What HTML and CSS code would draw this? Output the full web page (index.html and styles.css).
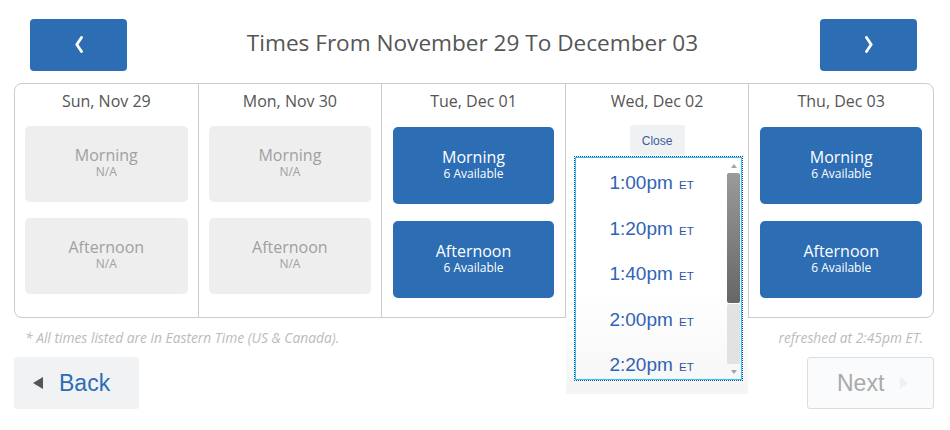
FILE: index.html
```html
<!DOCTYPE html>
<html lang="en">
<head>
<meta charset="utf-8">
<title>Times</title>
<link rel="stylesheet" href="styles.css">
</head>
<body>
<div class="page">
  <header class="topbar">
    <button class="nav-btn" aria-label="Previous">
      <svg width="10" height="17" viewBox="0 0 10 17"><path d="M7.5 1.5 L2.8 8.5 L7.5 15.5" fill="none" stroke="#fff" stroke-width="2.8" stroke-linecap="round" stroke-linejoin="round"/></svg>
    </button>
    <h1 class="title">Times From November 29 To December 03</h1>
    <button class="nav-btn" aria-label="Next">
      <svg width="10" height="17" viewBox="0 0 10 17"><path d="M2.5 1.5 L7.2 8.5 L2.5 15.5" fill="none" stroke="#fff" stroke-width="2.8" stroke-linecap="round" stroke-linejoin="round"/></svg>
    </button>
  </header>

  <div class="calendar">
    <div class="day">
      <div class="day-head">Sun, Nov 29</div>
      <div class="slots">
        <div class="slot slot-off"><span class="slot-name">Morning</span><span class="slot-sub">N/A</span></div>
        <div class="slot slot-off"><span class="slot-name">Afternoon</span><span class="slot-sub">N/A</span></div>
      </div>
    </div>
    <div class="day">
      <div class="day-head">Mon, Nov 30</div>
      <div class="slots">
        <div class="slot slot-off"><span class="slot-name">Morning</span><span class="slot-sub">N/A</span></div>
        <div class="slot slot-off"><span class="slot-name">Afternoon</span><span class="slot-sub">N/A</span></div>
      </div>
    </div>
    <div class="day">
      <div class="day-head">Tue, Dec 01</div>
      <div class="slots slots-on">
        <div class="slot slot-on"><span class="slot-name">Morning</span><span class="slot-sub">6 Available</span></div>
        <div class="slot slot-on"><span class="slot-name">Afternoon</span><span class="slot-sub">6 Available</span></div>
      </div>
    </div>
    <div class="day day-open">
      <div class="popup">
        <div class="day-head popup-head">Wed, Dec 02</div>
        <button class="close-btn">Close</button>
        <div class="listbox">
          <ul class="times">
            <li class="time">1:00pm <small>ET</small></li>
            <li class="time">1:20pm <small>ET</small></li>
            <li class="time">1:40pm <small>ET</small></li>
            <li class="time">2:00pm <small>ET</small></li>
            <li class="time">2:20pm <small>ET</small></li>
          </ul>
          <div class="scrollbar">
            <span class="sb-arrow sb-up"></span>
            <span class="sb-thumb"></span>
            <span class="sb-track"></span>
            <span class="sb-arrow sb-down"></span>
          </div>
        </div>
      </div>
    </div>
    <div class="day">
      <div class="day-head">Thu, Dec 03</div>
      <div class="slots slots-on">
        <div class="slot slot-on"><span class="slot-name">Morning</span><span class="slot-sub">6 Available</span></div>
        <div class="slot slot-on"><span class="slot-name">Afternoon</span><span class="slot-sub">6 Available</span></div>
      </div>
    </div>
  </div>

  <div class="notes">
    <span>* All times listed are in Eastern Time (US &amp; Canada).</span>
    <span>refreshed at 2:45pm ET.</span>
  </div>

  <div class="actions">
    <button class="back-btn"><span class="tri tri-left"></span>Back</button>
    <button class="next-btn">Next<span class="tri tri-right"></span></button>
  </div>
</div>
</body>
</html>
```

FILE: styles.css
```css
* { box-sizing: border-box; }
html, body { margin: 0; padding: 0; background: #fff; }
body { font-family: "Open Sans", "Liberation Sans", sans-serif; color: #555; }

.page { width: 950px; padding: 19px 16px 0 14px; }

.topbar {
  display: flex;
  align-items: center;
  justify-content: space-between;
  height: 52px;
  margin: 0 17px 0 16px;
}
.nav-btn {
  width: 97px;
  height: 52px;
  border: none;
  border-radius: 4px;
  background: #2c6db4;
  display: flex;
  align-items: center;
  justify-content: center;
  padding: 0;
  padding-bottom: 2px;
}
.title {
  margin: 0;
  font-size: 22.6px;
  line-height: 30px;
  font-weight: 400;
  color: #555;
  padding: 0 2px 5px 0;
}

.calendar {
  margin-top: 12px;
  height: 235px;
  border: 1px solid #ccc;
  border-radius: 8px;
  display: grid;
  grid-template-columns: repeat(5, 1fr);
}
.day {
  position: relative;
  border-right: 1px solid #ccc;
}
.day:last-child { border-right: none; }

.day-head {
  height: 42px;
  padding-top: 7px;
  line-height: 21px;
  text-align: center;
  font-size: 16px;
  color: #555;
}

.slots {
  display: flex;
  flex-direction: column;
  gap: 16px;
  padding: 0 10px;
}
.slots-on { gap: 17px; padding: 1px 11px 0 11px; }

.slot {
  height: 76px;
  border-radius: 5px;
  display: flex;
  flex-direction: column;
  align-items: center;
  padding-top: 19px;
}
.slot-on { height: 77px; background: #2c6db4; color: #fff; padding-top: 20px; }
.slot-off { background: #eee; color: #a0a0a0; }
.slot-name { font-size: 16px; line-height: 20px; }
.slot-sub { font-size: 12px; line-height: 13px; }

.popup {
  position: absolute;
  top: 0;
  left: 0;
  right: 0;
  height: 310px;
  z-index: 2;
  background: linear-gradient(#fff 0%, #fff 72%, #f4f4f4 100%);
  display: flex;
  flex-direction: column;
  align-items: center;
}
.popup-head { height: 41px; width: 100%; }
.close-btn {
  width: 55px;
  height: 30px;
  border: none;
  border-radius: 3px;
  background: #f0f1f3;
  color: #3d5c9c;
  font-family: "Liberation Sans", Arial, sans-serif;
  font-size: 12px;
  padding: 2px 0 0;
}
.listbox {
  margin-top: 2px;
  align-self: stretch;
  margin-left: 9px;
  margin-right: 6px;
  height: 223px;
  border: 1px solid #2bc3f5;
  outline: 1px dotted #1d4c8c;
  background: linear-gradient(#fff 0%, #fff 60%, #f7f7f7 100%);
  display: flex;
  overflow: hidden;
}
.times {
  list-style: none;
  margin: 0;
  padding: 2px 0 0;
  flex: 1;
}
.time {
  height: 45.6px;
  line-height: 45px;
  text-align: center;
  font-family: "Liberation Sans", Arial, sans-serif;
  font-size: 19px;
  color: #3063b6;
  padding-left: 2px;
}
.time small { font-size: 11.5px; margin-left: 1px; color: #2d55a8; }

.scrollbar {
  width: 16px;
  display: flex;
  flex-direction: column;
  align-items: center;
  padding: 0 1px 0 2px;
}
.sb-arrow {
  height: 15px;
  width: 100%;
  position: relative;
  flex: none;
}
.sb-arrow::after {
  content: "";
  position: absolute;
  left: 50%;
  top: 50%;
  transform: translate(-50%, -50%);
  border-left: 3px solid transparent;
  border-right: 3px solid transparent;
}
.sb-up::after { border-bottom: 4px solid #a3a3a3; }
.sb-down::after { border-top: 4px solid #a3a3a3; }
.sb-thumb {
  flex: none;
  height: 130px;
  width: 100%;
  border-radius: 2px;
  background: linear-gradient(#9a9a9a, #666);
}
.sb-track {
  flex: 1;
  width: 100%;
  margin-top: 1px;
  border-radius: 2px;
  background: #e2e2e2;
}

.notes {
  display: flex;
  justify-content: space-between;
  margin-top: 11px;
  padding: 0 11px 0 11px;
  font-style: italic;
  font-size: 13.8px;
  line-height: 18px;
  color: #bbb;
}

.actions {
  display: flex;
  justify-content: space-between;
  margin-top: 10px;
}
.back-btn, .next-btn {
  height: 52px;
  border-radius: 3px;
  font-family: "Liberation Sans", Arial, sans-serif;
  font-size: 23px;
  display: flex;
  align-items: center;
  padding: 0;
}
.back-btn {
  width: 125px;
  border: none;
  background: #f1f2f4;
  color: #2c6db4;
  padding-left: 19px;
}
.next-btn {
  width: 127px;
  border: 1px solid #ddd;
  background: #fafbfc;
  color: #aaa;
  padding-left: 29px;
}
.tri {
  width: 0;
  height: 0;
  border-top: 6px solid transparent;
  border-bottom: 6px solid transparent;
}
.tri-left { border-right: 10px solid #555; margin-right: 16px; }
.tri-right { border-left: 8px solid #eef0f3; margin-left: 16px; }
```
